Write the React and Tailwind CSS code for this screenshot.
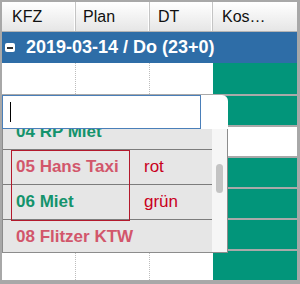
const rows = [true, true, false, true, true, true, true]

const items = [
  { name: '04 RP Miet', color: 'text-[#14936c]', note: '' },
  { name: '05 Hans Taxi', color: 'text-[#d2566b]', note: 'rot' },
  { name: '06 Miet', color: 'text-[#14936c]', note: 'grün' },
  { name: '08 Flitzer KTW', color: 'text-[#d2566b]', note: '' },
]

const HeaderCell = ({ label, className }) => (
  <div className={`h-full flex items-center border-r border-[#c4c4c4] shadow-[inset_-1px_0_0_#ffffff] text-[16px] text-[#111] ${className}`}>
    {label}
  </div>
)

export default function App() {
  return (
    <div className="relative w-[300px] h-[284px] overflow-hidden bg-white border-t-2 border-l-2 border-r-[3px] border-b-[3px] border-[#a8a8a8] font-['Liberation_Sans',Arial,sans-serif]">
      {/* column header */}
      <div className="flex h-[30px] border-b border-[#b4b4b4] bg-gradient-to-b from-white to-[#e6e6e6]">
        <HeaderCell label="KFZ" className="w-[74px] pl-[10px]" />
        <HeaderCell label="Plan" className="w-[74px] pl-[7px]" />
        <HeaderCell label="DT" className="w-[63px] pl-[8px]" />
        <HeaderCell label="Kos…" className="flex-1 pl-[9px] border-r-0 shadow-none" />
      </div>

      {/* group row */}
      <div className="flex items-center h-[31px] bg-[#2e6da7] text-white font-bold text-[18px]">
        <div className="ml-[3px] mr-[11px] w-[10px] h-[9px] rounded-[2px] bg-white flex items-center justify-center">
          <div className="w-[6px] h-[2px] bg-[#333]" />
        </div>
        <span>2019-03-14 / Do (23+0)</span>
      </div>

      {/* grid rows */}
      {rows.map((green, i) => (
        <div key={i} className={`flex border-b-2 border-[#a9a9a9] ${i === 0 ? 'h-[33px]' : 'h-[31px]'}`}>
          <div className="w-[74px] border-r border-dotted border-[#bdbdbd]" />
          <div className="w-[74px] border-r border-dotted border-[#bdbdbd]" />
          <div className="w-[63px]" />
          <div className={`flex-1 ${green ? 'bg-[#02957a]' : 'bg-white'}`} />
        </div>
      ))}

      {/* cell editor */}
      <div className="absolute left-0 top-[93px] w-[226px]">
        <div className="h-[34px] bg-white rounded-tr-[6px]">
          <div className="w-[199px] h-full border border-[#4a7fb9] flex items-center">
            <div className="ml-[7px] w-px h-[20px] bg-black" />
          </div>
        </div>
        <div className="relative h-[124px] overflow-hidden bg-[#e6e6e6] border-l border-r border-b border-[#8c8c8c]">
          <div className="-mt-[14px]">
            {items.map((it) => (
              <div key={it.name} className="flex items-center h-[35px] border-b border-[#7c7c7c] mr-[14px] text-[17px]">
                <span className={`w-[141px] pl-[13px] font-bold ${it.color}`}>{it.name}</span>
                <span className="text-[#c9001c]">{it.note}</span>
              </div>
            ))}
          </div>
          <div className="absolute left-[8px] top-[21px] w-[119px] h-[71px] border border-[#b3192c]" />
          <div className="absolute right-0 top-0 bottom-0 w-[15px] bg-[#f6f6f6] flex justify-center">
            <div className="mt-[35px] w-[7px] h-[29px] rounded-full bg-[#c4c4c4]" />
          </div>
        </div>
      </div>
    </div>
  )
}
